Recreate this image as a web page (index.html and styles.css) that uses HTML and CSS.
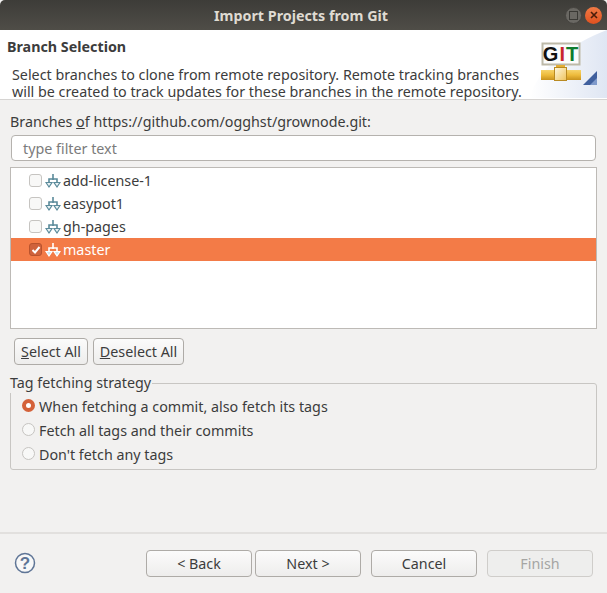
FILE: index.html
```html
<!DOCTYPE html>
<html lang="en">
<head>
    <meta charset="UTF-8">
    <title>Import Projects from Git</title>
    <link rel="stylesheet" href="styles.css">
</head>
<body>
<div class="window">
    <div class="titlebar">
        <span class="title">Import Projects from Git</span>
        <span class="win-btn win-max"><span class="max-glyph"></span></span>
        <span class="win-btn win-close">
            <svg width="10" height="10" viewBox="0 0 10 10"><path d="M2 2L8 8M8 2L2 8" stroke="#4a1d0a" stroke-width="1.6" fill="none"/></svg>
        </span>
    </div>

    <div class="banner">
        <div class="banner-text">
            <h1>Branch Selection</h1>
            <p>Select branches to clone from remote repository. Remote tracking branches<br>will be created to track updates for these branches in the remote repository.</p>
        </div>
        <div class="banner-art">
            <svg width="77" height="68" viewBox="0 0 77 68">
                <defs>
                    <linearGradient id="pipe" x1="0" y1="0" x2="0" y2="1">
                        <stop offset="0" stop-color="#f6d36a"/>
                        <stop offset="0.5" stop-color="#eebb3c"/>
                        <stop offset="1" stop-color="#c8921e"/>
                    </linearGradient>
                    <linearGradient id="joint" x1="0" y1="0" x2="1" y2="1">
                        <stop offset="0" stop-color="#fff8e0"/>
                        <stop offset="1" stop-color="#eec35c"/>
                    </linearGradient>
                    <linearGradient id="sheen" x1="0" y1="0" x2="1" y2="0">
                        <stop offset="0" stop-color="#fff"/>
                        <stop offset="1" stop-color="#dfe6f3"/>
                    </linearGradient>
                </defs>
                <path d="M0 68C6 40 40 14 77 0V68Z" fill="url(#sheen)"/>
                <rect x="12.5" y="13.5" width="37" height="21" fill="#fbfcfc" stroke="#bdb9a8" stroke-width="2"/>
                <text x="31" y="31" text-anchor="middle" class="git-text"><tspan fill="#111">G</tspan><tspan fill="#c8242c">I</tspan><tspan fill="#0e7d2c">T</tspan></text>
                <rect x="11" y="40" width="40" height="10" fill="url(#pipe)"/>
                <rect x="26" y="35" width="9" height="3" fill="#e3ad34"/>
                <rect x="24.5" y="37.5" width="12" height="13" fill="url(#joint)" stroke="#b98a22"/>
                <path d="M53 55L67 41V55Z" fill="#3f5f9d"/>
                <path d="M60 55L67 48V55Z" fill="#7f9acb"/>
            </svg>
        </div>
    </div>

    <div class="content">
        <label class="branches-label">Branches <u>o</u>f https://github.com/ogghst/grownode.git:</label>
        <div class="filter">type filter text</div>

        <div class="tree">
            <div class="row">
                <span class="check"></span>
                <svg class="branch-icon" width="16" height="16" viewBox="0 0 16 16">
                    <path class="stem" d="M8 1V7M8 6H4V10M8 6H12V10"/>
                    <path class="head" d="M1 9.5H7L4 14ZM9 9.5H15L12 14Z"/>
                </svg>
                <span>add-license-1</span>
            </div>
            <div class="row">
                <span class="check"></span>
                <svg class="branch-icon" width="16" height="16" viewBox="0 0 16 16">
                    <path class="stem" d="M8 1V7M8 6H4V10M8 6H12V10"/>
                    <path class="head" d="M1 9.5H7L4 14ZM9 9.5H15L12 14Z"/>
                </svg>
                <span>easypot1</span>
            </div>
            <div class="row">
                <span class="check"></span>
                <svg class="branch-icon" width="16" height="16" viewBox="0 0 16 16">
                    <path class="stem" d="M8 1V7M8 6H4V10M8 6H12V10"/>
                    <path class="head" d="M1 9.5H7L4 14ZM9 9.5H15L12 14Z"/>
                </svg>
                <span>gh-pages</span>
            </div>
            <div class="row selected">
                <span class="check checked">
                    <svg width="12" height="12" viewBox="0 0 12 12"><path d="M2.5 6L5 8.5L9.5 3" stroke="#fff" stroke-width="2" fill="none"/></svg>
                </span>
                <svg class="branch-icon" width="16" height="16" viewBox="0 0 16 16">
                    <path class="stem" d="M8 1V7M8 6H4V10M8 6H12V10"/>
                    <path class="head" d="M1 9.5H7L4 14ZM9 9.5H15L12 14Z"/>
                </svg>
                <span>master</span>
            </div>
        </div>

        <div class="select-buttons">
            <button class="btn btn-select"><u>S</u>elect All</button>
            <button class="btn btn-deselect"><u>D</u>eselect All</button>
        </div>

        <fieldset class="group">
            <legend>Tag fetching strategy</legend>
            <div class="radio-row"><span class="radio on"></span>When fetching a commit, also fetch its tags</div>
            <div class="radio-row"><span class="radio"></span>Fetch all tags and their commits</div>
            <div class="radio-row"><span class="radio"></span>Don't fetch any tags</div>
        </fieldset>
    </div>

    <div class="footer">
        <svg class="help" width="22" height="22" viewBox="0 0 22 22">
            <circle cx="11" cy="11" r="9.5" fill="#f8f8f8" stroke="#5f7596" stroke-width="1.5"/>
            <text x="11" y="17" text-anchor="middle" class="help-text">?</text>
        </svg>
        <div class="footer-buttons">
            <button class="btn wide">&lt; Back</button>
            <button class="btn wide next">Next &gt;</button>
            <button class="btn wide cancel">Cancel</button>
            <button class="btn wide disabled">Finish</button>
        </div>
    </div>
</div>
</body>
</html>
```

FILE: styles.css
```css
html, body {
    margin: 0;
    padding: 0;
}
body {
    font-family: "Noto Sans", sans-serif;
    font-size: 14.3px;
    color: #3c3c3c;
    background: #f2f1f0;
}
.window {
    width: 607px;
    height: 593px;
    display: flex;
    flex-direction: column;
    overflow: hidden;
}

/* title bar */
.titlebar {
    height: 30px;
    flex: none;
    display: flex;
    align-items: center;
    padding-right: 5px;
    box-sizing: border-box;
    background: linear-gradient(#3d3c38, #4f4d47);
    border-radius: 5px 5px 0 0;
}
.title {
    flex: 1;
    padding-left: 40px;
    text-align: center;
    font-weight: bold;
    font-size: 14.3px;
    color: #dfdbd2;
}
.win-btn {
    width: 17px;
    height: 17px;
    border-radius: 50%;
    display: flex;
    align-items: center;
    justify-content: center;
    margin-left: 3px;
}
.win-max {
    background: #6a6863;
    border: 1px solid #45433f;
    box-sizing: border-box;
}
.max-glyph {
    width: 7px;
    height: 7px;
    border: 1px solid #3a3935;
}
.win-close {
    background: linear-gradient(#f07a45, #e0511f);
}

/* banner */
.banner {
    height: 69px;
    flex: none;
    display: flex;
    justify-content: space-between;
    background: #fff;
    border-bottom: 1px solid #d6d4d2;
}
.banner-text h1 {
    margin: 8px 0 0 7px;
    font-size: 14.3px;
    line-height: 18px;
    color: #3c3c3c;
}
.banner-text p {
    margin: 10px 0 0 12px;
    line-height: 17px;
    white-space: nowrap;
    color: #3c3c3c;
}
.banner-art {
    width: 77px;
    height: 68px;
}
.git-text {
    font-family: "Liberation Sans", sans-serif;
    font-weight: bold;
    font-size: 20px;
    letter-spacing: 1px;
}

/* main area */
.content {
    flex: 1;
    padding: 13px 10px 0;
}
.branches-label {
    display: block;
    line-height: 18px;
    white-space: nowrap;
}
.filter {
    height: 26px;
    margin: 4px 1px 0;
    box-sizing: border-box;
    padding-left: 11px;
    line-height: 25px;
    color: #7b7b7b;
    background: #fff;
    border: 1px solid #b5b2ae;
    border-radius: 4px;
}
.tree {
    height: 162px;
    margin-top: 6px;
    box-sizing: border-box;
    padding-top: 1px;
    background: #fff;
    border: 1px solid #bdbab6;
}
.row {
    height: 23px;
    display: flex;
    align-items: center;
    padding-left: 18px;
    line-height: 23px;
}
.row.selected {
    background: #f37b47;
    color: #fff;
}
.check {
    width: 13px;
    height: 13px;
    box-sizing: border-box;
    flex: none;
    display: flex;
    align-items: center;
    justify-content: center;
    border: 1px solid #c6c4c1;
    border-radius: 3px;
    background: #f8f8f7;
}
.check svg {
    flex: none;
}
.check.checked {
    background: #cf623c;
    border-color: #b9532d;
}
.branch-icon {
    flex: none;
    margin: 0 2px 0 3px;
}
.stem {
    fill: none;
    stroke: #5a8a9a;
    stroke-width: 1.6;
}
.head {
    fill: #eaf3f5;
    stroke: #5a8a9a;
    stroke-width: 1.2;
}
.selected .stem {
    stroke: #fff;
}
.selected .head {
    fill: #cfe6ee;
    stroke: #fff;
}

/* buttons */
.btn {
    font-family: inherit;
    font-size: 14.3px;
    color: #3c3c3c;
    padding: 0 0 1px;
    height: 27px;
    box-sizing: border-box;
    background: linear-gradient(#fbfbfb, #eeedec);
    border: 1px solid #aeaba7;
    border-radius: 4px;
}
.select-buttons {
    display: flex;
    gap: 5px;
    margin: 9px 0 0 4px;
}
.btn-select {
    width: 74px;
}
.btn-deselect {
    width: 91px;
}

/* tag group */
.group {
    margin: 8px 0 0;
    padding: 1px 0 2px 11px;
    height: 97px;
    box-sizing: border-box;
    border: 1px solid #c8c6c3;
    border-radius: 3px;
}
.group legend {
    padding: 0;
    margin-left: -12px;
    line-height: 20px;
    padding-right: 1px;
}
.radio-row {
    height: 24px;
    display: flex;
    align-items: center;
    white-space: nowrap;
}
.radio {
    width: 13px;
    height: 13px;
    box-sizing: border-box;
    flex: none;
    margin: 0 4px 2px 0;
    border: 1px solid #c6c4c1;
    border-radius: 50%;
    background: #f8f8f7;
}
.radio.on {
    border: 4px solid #d4623a;
    background: #fff;
}

/* footer */
.footer {
    height: 61px;
    flex: none;
    box-sizing: border-box;
    padding: 16px 14px 0 14px;
    display: flex;
    justify-content: space-between;
    border-top: 2px solid #e2e0de;
}
.help {
    margin-top: 2px;
}
.help-text {
    font-family: "Liberation Sans", sans-serif;
    font-weight: bold;
    font-size: 17px;
    fill: #5f7596;
}
.footer-buttons {
    display: flex;
    gap: 3px;
}
.wide {
    width: 106px;
}
.cancel {
    margin-left: 7px;
}
.disabled {
    margin-left: 7px;
    color: #a5a5a3;
    background: #eeeeed;
    border-color: #cfcdca;
}
```
